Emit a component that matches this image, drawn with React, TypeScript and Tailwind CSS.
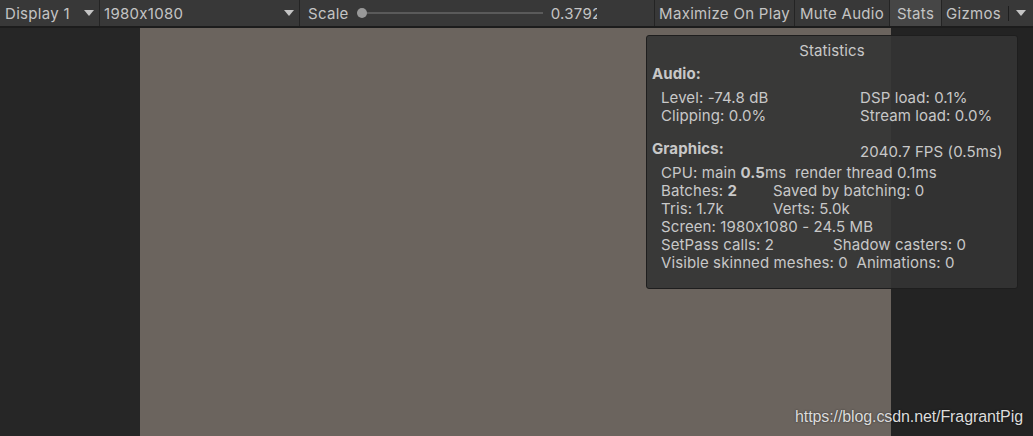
import React from "react";

const Arrow = () => (
  <svg width="10" height="6" viewBox="0 0 10 6" className="shrink-0">
    <path d="M0 0 L10 0 L5 6 Z" fill="#c4c4c4" />
  </svg>
);

export default function App() {
  return (
    <div className="w-[1033px] h-[436px] overflow-hidden bg-[#242424] relative font-['Inter','Noto_Sans',sans-serif] [font-feature-settings:'calt'_0]">
      {/* toolbar */}
      <div className="h-[28px] flex bg-[#383838] border-b-2 border-[#1c1c1c] text-[15px] text-[#c4c4c4] leading-none tracking-[0.3px]">
        <div className="w-[100px] flex items-center justify-between pl-[5px] pr-[5px] border-r border-[#242424]">
          <span>Display 1</span>
          <Arrow />
        </div>
        <div className="w-[200px] flex items-center justify-between pl-[4px] pr-[5px] border-r border-[#242424]">
          <span>1980x1080</span>
          <Arrow />
        </div>
        <div className="w-[355px] flex items-center pl-[8px] border-r border-[#242424] overflow-hidden">
          <span>Scale</span>
          <div className="ml-[8px] w-[186px] h-[10px] relative flex items-center shrink-0">
            <div className="w-full h-[2px] bg-[#5a5a5a]" />
            <div className="absolute left-0 top-0 w-[10px] h-[10px] rounded-full bg-[#999999]" />
          </div>
          <span className="ml-[8px] w-[46px] overflow-hidden whitespace-nowrap shrink-0">0.3792</span>
        </div>
        <div className="w-[140px] flex items-center justify-center border-r border-[#242424] whitespace-nowrap">Maximize On Play</div>
        <div className="w-[95px] flex items-center justify-center border-r border-[#242424] whitespace-nowrap">Mute Audio</div>
        <div className="w-[52px] flex items-center justify-center bg-[#464646] border-r border-[#242424]">Stats</div>
        <div className="flex-1 flex items-center pl-[4px]">
          <span>Gizmos</span>
          <div className="ml-[7px] w-px h-[15px] bg-[#1e1e1e]" />
          <div className="ml-[7px]"><Arrow /></div>
        </div>
      </div>

      {/* main area */}
      <div className="flex h-[408px]">
        <div className="w-[140px] bg-[#262626]" />
        <div className="w-[751px] bg-[#6b645e]" />
        <div className="flex-1 bg-[#232323]" />
      </div>

      {/* statistics overlay */}
      <div className="absolute left-[646px] top-[35px] w-[372px] h-[254px] rounded-[3px] border border-[#1e1e1e] bg-[rgba(52,52,52,0.9)] text-[15px] text-[#c8c8c8] leading-[18px] whitespace-nowrap tracking-[0.1px]">
        <div className="text-center mt-[6px]">Statistics</div>
        <div className="pl-[5px] mt-[5px] font-bold">Audio:</div>
        <div className="flex pl-[14px] mt-[6px]">
          <div className="w-[199px]">
            <div>Level: -74.8 dB</div>
            <div>Clipping: 0.0%</div>
          </div>
          <div>
            <div>DSP load: 0.1%</div>
            <div>Stream load: 0.0%</div>
          </div>
        </div>
        <div className="flex mt-[15px]">
          <div className="pl-[5px] w-[213px] font-bold">Graphics:</div>
          <div className="mt-[3px]">2040.7 FPS (0.5ms)</div>
        </div>
        <div className="pl-[14px] mt-[3px]">
          <div>CPU: main <b>0.5</b>ms&nbsp; render thread 0.1ms</div>
          <div className="flex"><span className="w-[112px]">Batches: <b>2</b></span><span>Saved by batching: 0</span></div>
          <div className="flex"><span className="w-[112px]">Tris: 1.7k</span><span>Verts: 5.0k</span></div>
          <div>Screen: 1980x1080 - 24.5 MB</div>
          <div className="flex"><span className="w-[172px]">SetPass calls: 2</span><span>Shadow casters: 0</span></div>
          <div>Visible skinned meshes: 0&nbsp; Animations: 0</div>
        </div>
      </div>

      {/* watermark */}
      <div className="absolute left-[795px] top-[405px] text-[16px] text-[#dcdcdc] whitespace-nowrap tracking-[-0.1px] font-['Liberation_Sans',Arial,sans-serif] [text-shadow:0_0_2px_rgba(0,0,0,0.6)]">
        https://blog.csdn.net/FragrantPig
      </div>
    </div>
  );
}
